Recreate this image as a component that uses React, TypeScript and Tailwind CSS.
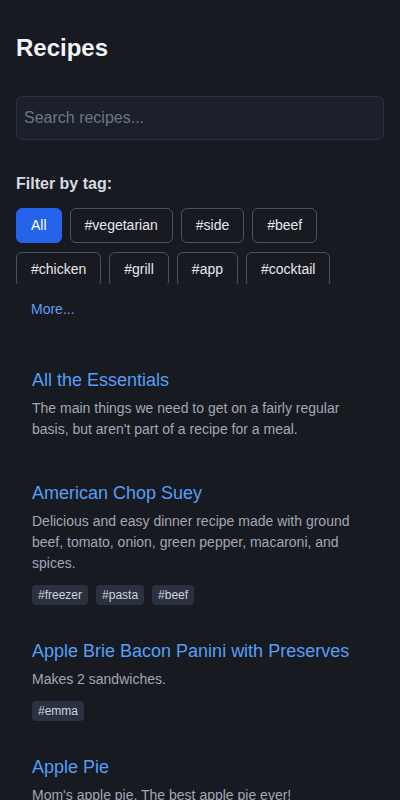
const tags = ['All', '#vegetarian', '#side', '#beef', '#chicken', '#grill', '#app', '#cocktail'];

const recipes = [
  {
    title: 'All the Essentials',
    description:
      "The main things we need to get on a fairly regular basis, but aren't part of a recipe for a meal.",
    tags: [] as string[],
  },
  {
    title: 'American Chop Suey',
    description:
      'Delicious and easy dinner recipe made with ground beef, tomato, onion, green pepper, macaroni, and spices.',
    tags: ['#freezer', '#pasta', '#beef'],
  },
  {
    title: 'Apple Brie Bacon Panini with Preserves',
    description: 'Makes 2 sandwiches.',
    tags: ['#emma'],
  },
  {
    title: 'Apple Pie',
    description: "Mom's apple pie. The best apple pie ever!",
    tags: ['#dessert'],
  },
];

export default function App() {
  const active = 'All';

  return (
    <div className="min-h-screen bg-[#181a22] px-4 pt-8 pb-8 font-['Liberation_Sans',Arial,sans-serif]">
      {/* Header */}
      <h1 className="text-2xl leading-8 font-bold text-[#f3f4f6]">Recipes</h1>

      {/* Search */}
      <input
        type="text"
        placeholder="Search recipes..."
        className="mt-8 w-full rounded-md border border-[#2c3340] bg-[#1c202b] px-[7px] py-[9px] text-base leading-6 text-[#e5e7eb] placeholder:text-[#6b7789] outline-none"
      />

      {/* Tag filter */}
      <div className="mt-8">
        <h2 className="mb-3 text-base leading-6 font-bold text-[#d7dbe2]">Filter by tag:</h2>
        <div className="flex h-[76px] flex-wrap gap-x-2 gap-y-[9px] overflow-hidden">
          {tags.map((tag) => (
            <button
              key={tag}
              className={`rounded-md border px-3.5 py-2 text-sm leading-[17px] ${
                tag === active
                  ? 'border-[#2563eb] bg-[#2563eb] text-white'
                  : 'border-[#4a5263] bg-transparent text-[#e5e7eb]'
              }`}
            >
              {tag}
            </button>
          ))}
        </div>
        <button className="mt-2 rounded-md border border-transparent px-3.5 py-2 text-sm leading-[17px] text-[#5a9ff2]">
          More...
        </button>
      </div>

      {/* Recipe list */}
      <ul className="mt-[23px]">
        {recipes.map((recipe) => (
          <li key={recipe.title} className="p-4">
            <a className="block text-lg leading-7 text-[#559ff5]">{recipe.title}</a>
            <p
              className={`mt-1 text-sm leading-[21px] text-[#a0a7b4] ${
                recipe.tags.length > 0 ? 'mb-2' : 'mb-[7px]'
              }`}
            >
              {recipe.description}
            </p>
            {recipe.tags.length > 0 && (
              <div className="flex flex-wrap gap-2 pt-[3px]">
                {recipe.tags.map((t) => (
                  <span
                    key={t}
                    className="rounded bg-[#2b3140] px-1.5 py-0.5 text-xs leading-4 text-[#cfd4dc]"
                  >
                    {t}
                  </span>
                ))}
              </div>
            )}
          </li>
        ))}
      </ul>
    </div>
  );
}
